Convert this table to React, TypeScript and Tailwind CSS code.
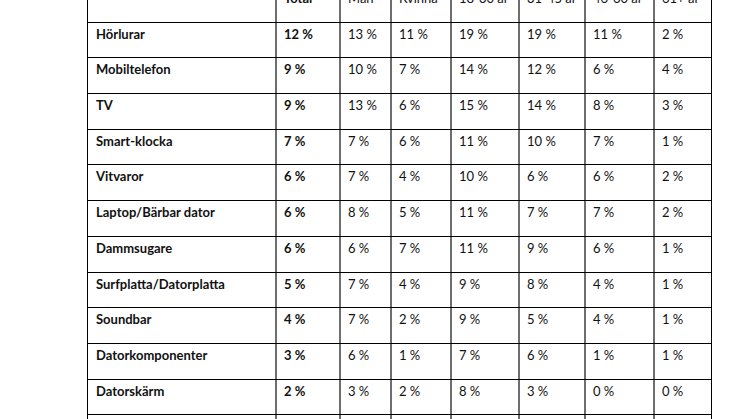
import React from "react";

type Row = {
	label: string;
	total: string;
	values: string[];
};

const header = ["Man", "Kvinna", "18-30 år", "31-45 år", "46-60 år", "61+ år"];

const rows: Row[] = [
	{ label: "Hörlurar", total: "12 %", values: ["13 %", "11 %", "19 %", "19 %", "11 %", "2 %"] },
	{ label: "Mobiltelefon", total: "9 %", values: ["10 %", "7 %", "14 %", "12 %", "6 %", "4 %"] },
	{ label: "TV", total: "9 %", values: ["13 %", "6 %", "15 %", "14 %", "8 %", "3 %"] },
	{ label: "Smart-klocka", total: "7 %", values: ["7 %", "6 %", "11 %", "10 %", "7 %", "1 %"] },
	{ label: "Vitvaror", total: "6 %", values: ["7 %", "4 %", "10 %", "6 %", "6 %", "2 %"] },
	{ label: "Laptop/Bärbar dator", total: "6 %", values: ["8 %", "5 %", "11 %", "7 %", "7 %", "2 %"] },
	{ label: "Dammsugare", total: "6 %", values: ["6 %", "7 %", "11 %", "9 %", "6 %", "1 %"] },
	{ label: "Surfplatta/Datorplatta", total: "5 %", values: ["7 %", "4 %", "9 %", "8 %", "4 %", "1 %"] },
	{ label: "Soundbar", total: "4 %", values: ["7 %", "2 %", "9 %", "5 %", "4 %", "1 %"] },
	{ label: "Datorkomponenter", total: "3 %", values: ["6 %", "1 %", "7 %", "6 %", "1 %", "1 %"] },
	{ label: "Datorskärm", total: "2 %", values: ["3 %", "2 %", "8 %", "3 %", "0 %", "0 %"] },
	{ label: "", total: "", values: ["", "", "", "", "", ""] },
];

const rowClass =
	"grid grid-cols-[187px_64px_51px_60px_68px_66px_69px_58px] h-[35.7px] border-b border-black";
const cellClass = "px-2 pt-[3px] leading-[16px]";
const sepClass = "border-l-2 border-[#6e6e6e] pl-[7px] pr-1 pt-[3px] leading-[16px] whitespace-nowrap";

export default function App() {
	return (
		<div
			className="w-[746px] h-[419px] overflow-hidden bg-white text-[#111] text-[13px]"
			style={{ fontFamily: "Lato, 'Open Sans', sans-serif" }}
		>
			<div className="ml-[87px] -mt-[13px] w-[625px] border-l border-r border-black">
				<div className={rowClass}>
					<div className={cellClass} />
					<div className={sepClass + " font-bold"}>Total</div>
					{header.map((h) => (
						<div key={h} className={sepClass}>
							{h}
						</div>
					))}
				</div>
				{rows.map((row, i) => (
					<div key={i} className={rowClass}>
						<div className={cellClass + " font-bold"}>{row.label}</div>
						<div className={sepClass + " font-bold"}>{row.total}</div>
						{row.values.map((v, j) => (
							<div key={j} className={sepClass}>
								{v}
							</div>
						))}
					</div>
				))}
			</div>
		</div>
	);
}
